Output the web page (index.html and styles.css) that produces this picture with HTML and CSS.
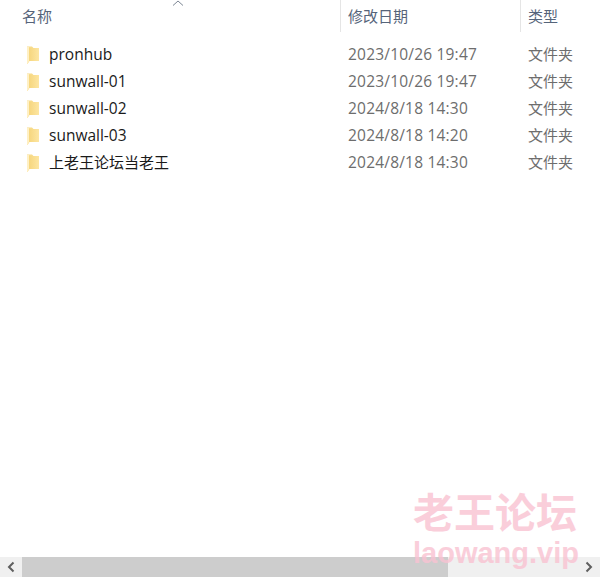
FILE: index.html
```html
<!DOCTYPE html>
<html lang="zh-CN">
<head>
<meta charset="utf-8">
<title>文件列表</title>
<link rel="stylesheet" href="styles.css">
</head>
<body>
<div class="window">
  <div class="header">
    <div class="col-name head-cell">名称
      <svg class="sort" width="12" height="6" viewBox="0 0 12 6"><path d="M1 5.500 6 1l5 4.500" fill="none" stroke="#7d8794" stroke-width="1"/></svg>
    </div>
    <div class="col-date head-cell">修改日期</div>
    <div class="col-type head-cell">类型</div>
  </div>
  <div class="list">
    <div class="row"><div class="col-name name"><svg class="folder" viewBox="0 0 14 18" width="14" height="18"><use href="#f"/></svg>pronhub</div><div class="col-date meta">2023/10/26 19:47</div><div class="col-type kind">文件夹</div></div>
    <div class="row"><div class="col-name name"><svg class="folder" viewBox="0 0 14 18" width="14" height="18"><use href="#f"/></svg>sunwall-01</div><div class="col-date meta">2023/10/26 19:47</div><div class="col-type kind">文件夹</div></div>
    <div class="row"><div class="col-name name"><svg class="folder" viewBox="0 0 14 18" width="14" height="18"><use href="#f"/></svg>sunwall-02</div><div class="col-date meta">2024/8/18 14:30</div><div class="col-type kind">文件夹</div></div>
    <div class="row"><div class="col-name name"><svg class="folder" viewBox="0 0 14 18" width="14" height="18"><use href="#f"/></svg>sunwall-03</div><div class="col-date meta">2024/8/18 14:20</div><div class="col-type kind">文件夹</div></div>
    <div class="row"><div class="col-name name cjk"><svg class="folder" viewBox="0 0 14 18" width="14" height="18"><use href="#f"/></svg>上老王论坛当老王</div><div class="col-date meta">2024/8/18 14:30</div><div class="col-type kind">文件夹</div></div>
  </div>
  <div class="scrollbar">
    <div class="arrow"><svg width="10" height="12" viewBox="0 0 10 12"><path d="M7.500 1.500 3 6l4.500 4.500" fill="none" stroke="#5f5f5f" stroke-width="2"/></svg></div>
    <div class="thumb"></div>
    <div class="track"></div>
    <div class="arrow"><svg width="10" height="12" viewBox="0 0 10 12"><path d="M2.500 1.500 7 6l-4.500 4.500" fill="none" stroke="#5f5f5f" stroke-width="2"/></svg></div>
  </div>
  <div class="watermark">
    <div class="wm-cn">老王论坛</div>
    <div class="wm-en">laowang.vip</div>
  </div>
</div>
<svg width="0" height="0" class="defs"><defs>
  <linearGradient id="g" x1="0" y1="0" x2="1" y2="0"><stop offset="0" stop-color="#f6d67e"/><stop offset="1" stop-color="#fde6a2"/></linearGradient>
  <g id="f"><path d="M1 0.500h5l1.500 1.500H13v13H3.500L1.500 18H1z" fill="#f7dc8c"/><path d="M3 2h10v13H3z" fill="url(#g)"/><path d="M1 1h2v14l-1.500 3H1z" fill="#fff0c4"/></g>
</defs></svg>
</body>
</html>
```
FILE: styles.css
```css
html, body {
  margin: 0;
  padding: 0;
  background: #fff;
}
.window {
  position: relative;
  width: 600px;
  height: 577px;
  display: flex;
  flex-direction: column;
  overflow: hidden;
  font-family: "Open Sans", "Noto Sans CJK SC", sans-serif;
  font-size: 15px;
}
.defs {
  position: absolute;
}
.header {
  display: flex;
  height: 32px;
  flex: none;
}
.head-cell {
  position: relative;
  line-height: 33px;
  color: #56647a;
  font-size: 15px;
  box-sizing: border-box;
}
.col-name {
  width: 340px;
  flex: none;
  display: flex;
  align-items: center;
}
.head-cell.col-name {
  padding-left: 22px;
}
.col-date {
  width: 180px;
  flex: none;
  padding-left: 8px;
  box-sizing: border-box;
}
.col-type {
  flex: 1;
  padding-left: 8px;
}
.head-cell.col-date,
.head-cell.col-type {
  border-left: 1px solid #e5e5e5;
  padding-left: 7px;
}
.sort {
  position: absolute;
  left: 172px;
  top: 0;
}
.list {
  flex: 1;
  padding-top: 9px;
}
.row {
  display: flex;
  height: 27px;
  line-height: 27px;
}
.name {
  color: #1a1a1a;
  font-size: 15.5px;
}
.name.cjk {
  font-size: 15px;
}
.folder {
  margin-left: 26px;
  margin-right: 9px;
  flex: none;
}
.meta {
  color: #6d6d6d;
  font-size: 15.5px;
  letter-spacing: 0.2px;
}
.kind {
  color: #6d6d6d;
}
.scrollbar {
  display: flex;
  height: 20px;
  flex: none;
  background: #f0f0f0;
}
.arrow {
  width: 22px;
  flex: none;
  display: flex;
  align-items: center;
  justify-content: center;
}
.thumb {
  width: 426px;
  flex: none;
  background: #cdcdcd;
}
.track {
  flex: 1;
}
.watermark {
  position: absolute;
  left: 413px;
  top: 486px;
  color: #f9c3d2;
  opacity: 0.8;
  font-weight: 700;
  font-family: "Noto Sans CJK SC", sans-serif;
}
.wm-cn {
  font-size: 41px;
  line-height: 48px;
}
.wm-en {
  font-family: "Liberation Sans", sans-serif;
  font-size: 29px;
  line-height: 30px;
  margin-top: 4px;
  white-space: nowrap;
}
```
